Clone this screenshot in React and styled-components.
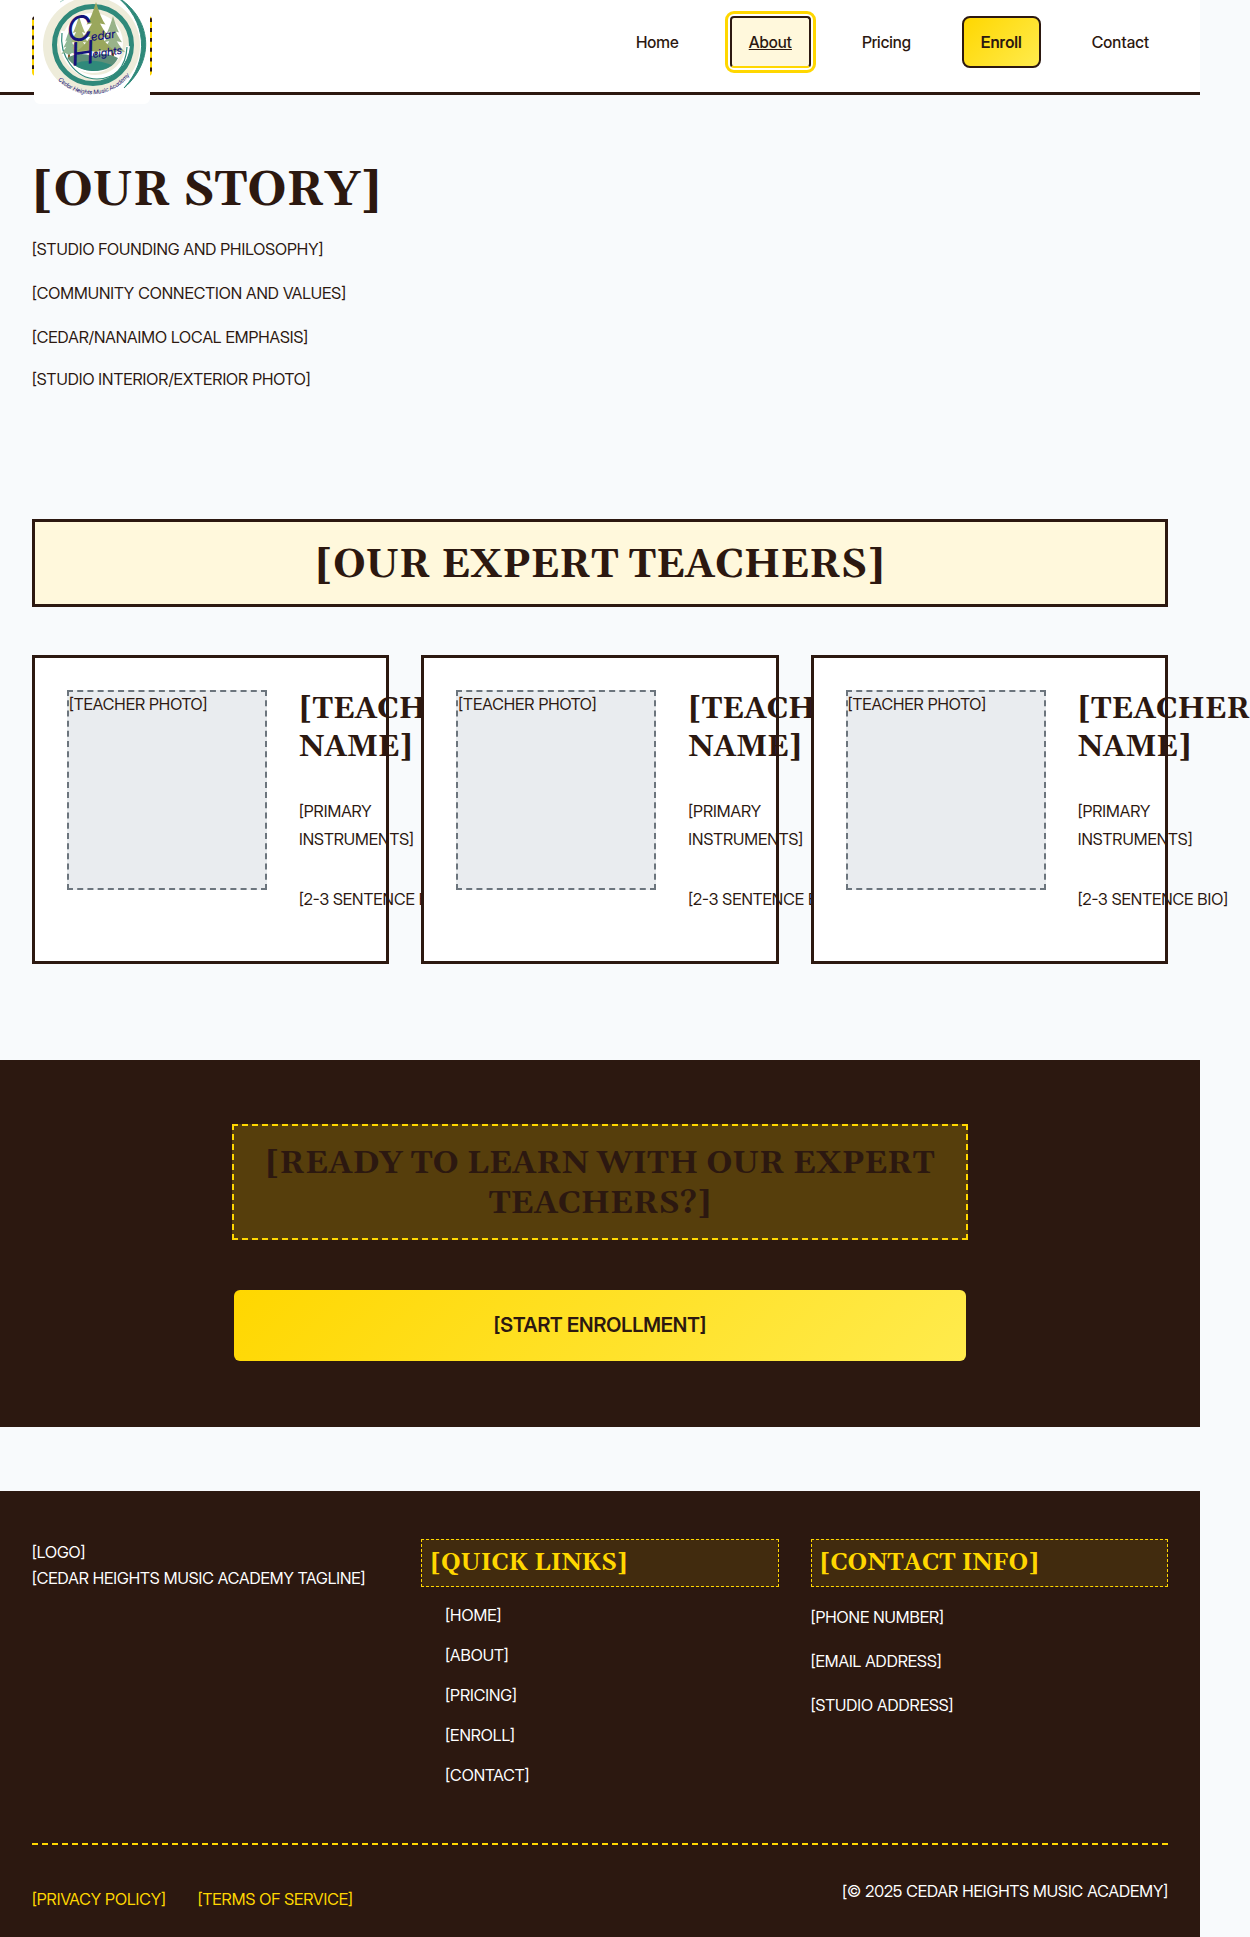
import React from "react";
import styled, { createGlobalStyle, css } from "styled-components";

const bark = "#2c1810";
const gold = "#ffd700";
const cream = "#fff8dc";
const serif = 'Georgia, Gelasio, "Liberation Serif", serif';
const sans = '"Inter Display", Inter, "Liberation Sans", sans-serif';

const GlobalStyle = createGlobalStyle`
  *, *::before, *::after { box-sizing: border-box; }
  html { background: #f8fafc; overflow-x: hidden; }
  body {
    margin: 0;
    color: ${bark};
    font-family: ${sans};
    font-size: 16px;
    line-height: 26px;
  }
  h1, h2, h3, p, ul { margin: 0; padding: 0; }
  h1, h2, h3 { font-family: ${serif}; font-weight: 700; }
  ul { list-style: none; }
  a { color: inherit; text-decoration: none; }
`;

const Page = styled.div`
  max-width: 1200px;
`;

const Header = styled.header`
  display: flex;
  justify-content: space-between;
  align-items: flex-start;
  padding: 16px 32px;
  background: #fff;
  border-bottom: 3px solid ${bark};
`;

const LogoLink = styled.a`
  display: flex;
  align-items: center;
  justify-content: center;
  width: 120px;
  height: 60px;
  background: ${bark};
  border: 2px dashed ${gold};
  border-radius: 4px;
`;

const LogoArt = styled.svg`
  flex: none;
  width: 116px;
  height: 116px;
  background: #fff;
  border-radius: 6px;
`;

const NavList = styled.ul`
  display: flex;
  gap: 32px;
`;

const NavLink = styled.a`
  display: block;
  padding: 12px 17px;
  border: 2px solid transparent;
  border-radius: 4px;
  font-weight: 500;
  line-height: 24px;
  ${(p) =>
    p.$kind === "current" &&
    css`
      background: ${cream};
      border-color: ${bark};
      border-bottom-color: ${gold};
      outline: 3px solid ${gold};
      outline-offset: 2px;
      text-decoration: underline;
    `}
  ${(p) =>
    p.$kind === "action" &&
    css`
      background: linear-gradient(135deg, ${gold}, #ffeb4d);
      border-color: ${bark};
      border-radius: 8px;
      font-weight: 600;
    `}
`;

const Story = styled.section`
  padding: 64px 32px;
`;

const PageTitle = styled.h1`
  margin-bottom: 12px;
  font-size: 48px;
  line-height: 64px;
`;

const Paragraph = styled.p`
  margin-bottom: 16px;
  line-height: 28px;
`;

const StoryPhoto = styled.div`
  line-height: 24px;
`;

const Teachers = styled.section`
  padding: 64px 32px 96px;
`;

const SectionTitle = styled.h2`
  margin-bottom: 48px;
  padding: 18px 16px 12px;
  background: ${cream};
  border: 3px solid ${bark};
  font-size: 40px;
  line-height: 52px;
  text-align: center;
`;

const CardGrid = styled.div`
  display: grid;
  grid-template-columns: repeat(3, minmax(0, 1fr));
  gap: 32px;
`;

const Card = styled.article`
  display: flex;
  gap: 32px;
  padding: 32px;
  background: #fff;
  border: 3px solid ${bark};
`;

const Photo = styled.div`
  flex: none;
  width: 200px;
  height: 200px;
  background: #e9ecef;
  border: 2px dashed #6c757d;
  line-height: 24px;
`;

const Details = styled.div`
  flex: 1;
`;

const TeacherName = styled.h3`
  margin-bottom: 31px;
  font-size: 30px;
  line-height: 38px;
`;

const Instruments = styled(Paragraph)`
  margin-bottom: 32px;
`;

const CallToAction = styled.section`
  padding: 64px 32px;
  background: ${bark};
`;

const CallInner = styled.div`
  max-width: 736px;
  margin: 0 auto;
`;

const CallTitle = styled.h2`
  margin-bottom: 48px;
  padding: 18px 16px 14px;
  background: rgba(255, 215, 0, 0.2);
  border: 2px dashed ${gold};
  font-size: 32px;
  line-height: 40px;
  text-align: center;
`;

const EnrollButton = styled.button`
  display: block;
  width: 100%;
  padding: 20px 32px;
  background: linear-gradient(135deg, ${gold}, #ffeb4d) padding-box;
  border: 2px solid transparent;
  border-radius: 8px;
  color: ${bark};
  font-family: inherit;
  font-size: 20px;
  font-weight: 600;
  line-height: 31px;
  cursor: pointer;
`;

const Footer = styled.footer`
  margin-top: 64px;
  padding: 48px 32px 16px;
  background: ${bark};
  color: #fff;
`;

const FooterColumns = styled.div`
  display: grid;
  grid-template-columns: repeat(3, minmax(0, 1fr));
  gap: 32px;
  padding-bottom: 56px;
`;

const FooterTitle = styled.h3`
  margin-bottom: 16px;
  padding: 8px;
  background: rgba(255, 215, 0, 0.1);
  border: 1px dashed ${gold};
  color: ${gold};
  font-size: 24px;
  line-height: 30px;
`;

const QuickLinks = styled.ul`
  display: grid;
  gap: 16px;
  padding-left: 24px;
  line-height: 24px;
`;

const FooterBottom = styled.div`
  display: flex;
  justify-content: space-between;
  padding-top: 32px;
  border-top: 2px dashed ${gold};
`;

const LegalLinks = styled.nav`
  display: flex;
  gap: 32px;
  color: ${gold};
  line-height: 44px;
`;

const ScriptText = styled.text`
  fill: #14127a;
  font-family: ${sans};
  font-style: italic;
`;

function Tree({ x, y, w, h, tone }) {
  const tiers = [0, 0.26, 0.52];
  return (
    <g fill={tone}>
      <rect x={x - 1} y={y + h - 1} width="2" height="5" fill="#8a5a2c" />
      {tiers.map((t, i) => {
        const top = y + h * t;
        const bottom = y + h * (0.46 + i * 0.27);
        const half = (w / 2) * (0.5 + i * 0.25);
        return (
          <path
            key={t}
            d={`M${x} ${top} Q${x + half * 0.5} ${bottom - 6} ${x + half} ${bottom} L${x + half * 0.4} ${bottom - 1} L${x} ${bottom + 1} L${x - half * 0.5} ${bottom - 1} L${x - half} ${bottom} Q${x - half * 0.5} ${bottom - 6} ${x} ${top}Z`}
          />
        );
      })}
    </g>
  );
}

function Logo() {
  return (
    <LogoArt viewBox="0 0 116 116" role="img" aria-label="Cedar Heights Music Academy">
      <defs>
        <path id="logo-rim" d="M16 81 A47 47 0 0 0 102 75" />
      </defs>
      <circle cx="57.500" cy="57.500" r="48.500" fill="#eeecda" />
      <path d="M26 14 Q34 8 44 7" fill="none" stroke="#a7d0c6" strokeWidth="1" />
      <path
        d="M82 8 C118 30 122 72 90 100 C116 72 113 32 82 8Z"
        fill="#2f897a"
        stroke="#2f897a"
        strokeWidth="1"
      />
      <circle cx="59" cy="57" r="38.500" fill="#eeecda" stroke="#2f897a" strokeWidth="5" />
      <ellipse cx="58.500" cy="55" rx="30.500" ry="30" fill="#fff" />
      <path
        d="M29 43 C23 64 38 88 61 89 C79 89 92 76 94 58"
        fill="none"
        stroke="#fff"
        strokeWidth="4"
      />
      <path
        d="M28 45 C25 67 41 91 63 91 C80 91 92 80 93 59"
        fill="none"
        stroke="#2f897a"
        strokeWidth="1.200"
      />
      <Tree x={45} y={28} w={25} h={37} tone="#a7b573" />
      <Tree x={79} y={28} w={24} h={36} tone="#99b38a" />
      <Tree x={35} y={43} w={15} h={23} tone="#8fb796" />
      <Tree x={62} y={14} w={38} h={49} tone="#9aa75d" />
      <path d="M33 70 Q45 63 58 68 Q71 63 84 70 Q78 83 59 83 Q42 82 33 70Z" fill="#5f8f78" />
      <path d="M39 76 Q57 69 78 77 Q70 83 58 83 Q46 82 39 76Z" fill="#2f897a" />
      <g transform="rotate(-8 58 56)">
        <ScriptText x="35" y="51" fontSize="34">C</ScriptText>
        <ScriptText x="58" y="53" fontSize="12" fontWeight="500">edar</ScriptText>
        <ScriptText x="36" y="75" fontSize="32">H</ScriptText>
        <ScriptText x="57" y="70" fontSize="11" fontWeight="500">eights</ScriptText>
      </g>
      <ScriptText fontSize="6">
        <textPath href="#logo-rim" startOffset="50%" textAnchor="middle">
          Cedar Heights Music Academy
        </textPath>
      </ScriptText>
    </LogoArt>
  );
}

const navItems = [
  { label: "Home" },
  { label: "About", kind: "current" },
  { label: "Pricing" },
  { label: "Enroll", kind: "action" },
  { label: "Contact" },
];

const storyLines = [
  "[STUDIO FOUNDING AND PHILOSOPHY]",
  "[COMMUNITY CONNECTION AND VALUES]",
  "[CEDAR/NANAIMO LOCAL EMPHASIS]",
];

const quickLinks = ["HOME", "ABOUT", "PRICING", "ENROLL", "CONTACT"];
const contactLines = ["[PHONE NUMBER]", "[EMAIL ADDRESS]", "[STUDIO ADDRESS]"];

export default function App() {
  return (
    <Page>
      <GlobalStyle />
      <Header>
        <LogoLink href="#home">
          <Logo />
        </LogoLink>
        <nav aria-label="Main">
          <NavList>
            {navItems.map(({ label, kind }) => (
              <li key={label}>
                <NavLink
                  href={`#${label.toLowerCase()}`}
                  $kind={kind}
                  aria-current={kind === "current" ? "page" : undefined}
                >
                  {label}
                </NavLink>
              </li>
            ))}
          </NavList>
        </nav>
      </Header>

      <main>
        <Story>
          <PageTitle>[OUR STORY]</PageTitle>
          {storyLines.map((line) => (
            <Paragraph key={line}>{line}</Paragraph>
          ))}
          <StoryPhoto>[STUDIO INTERIOR/EXTERIOR PHOTO]</StoryPhoto>
        </Story>

        <Teachers>
          <SectionTitle>[OUR EXPERT TEACHERS]</SectionTitle>
          <CardGrid>
            {[1, 2, 3].map((id) => (
              <Card key={id}>
                <Photo>[TEACHER PHOTO]</Photo>
                <Details>
                  <TeacherName>[TEACHER NAME]</TeacherName>
                  <Instruments>[PRIMARY INSTRUMENTS]</Instruments>
                  <Paragraph>[2-3 SENTENCE BIO]</Paragraph>
                </Details>
              </Card>
            ))}
          </CardGrid>
        </Teachers>

        <CallToAction>
          <CallInner>
            <CallTitle>[READY TO LEARN WITH OUR EXPERT TEACHERS?]</CallTitle>
            <EnrollButton type="button">[START ENROLLMENT]</EnrollButton>
          </CallInner>
        </CallToAction>
      </main>

      <Footer>
        <FooterColumns>
          <div>
            <div>[LOGO]</div>
            <div>[CEDAR HEIGHTS MUSIC ACADEMY TAGLINE]</div>
          </div>
          <div>
            <FooterTitle>[QUICK LINKS]</FooterTitle>
            <QuickLinks>
              {quickLinks.map((label) => (
                <li key={label}>
                  <a href={`#${label.toLowerCase()}`}>[{label}]</a>
                </li>
              ))}
            </QuickLinks>
          </div>
          <div>
            <FooterTitle>[CONTACT INFO]</FooterTitle>
            {contactLines.map((line) => (
              <Paragraph key={line}>{line}</Paragraph>
            ))}
          </div>
        </FooterColumns>
        <FooterBottom>
          <LegalLinks aria-label="Legal">
            <a href="#privacy">[PRIVACY POLICY]</a>
            <a href="#terms">[TERMS OF SERVICE]</a>
          </LegalLinks>
          <Paragraph>[© 2025 CEDAR HEIGHTS MUSIC ACADEMY]</Paragraph>
        </FooterBottom>
      </Footer>
    </Page>
  );
}
